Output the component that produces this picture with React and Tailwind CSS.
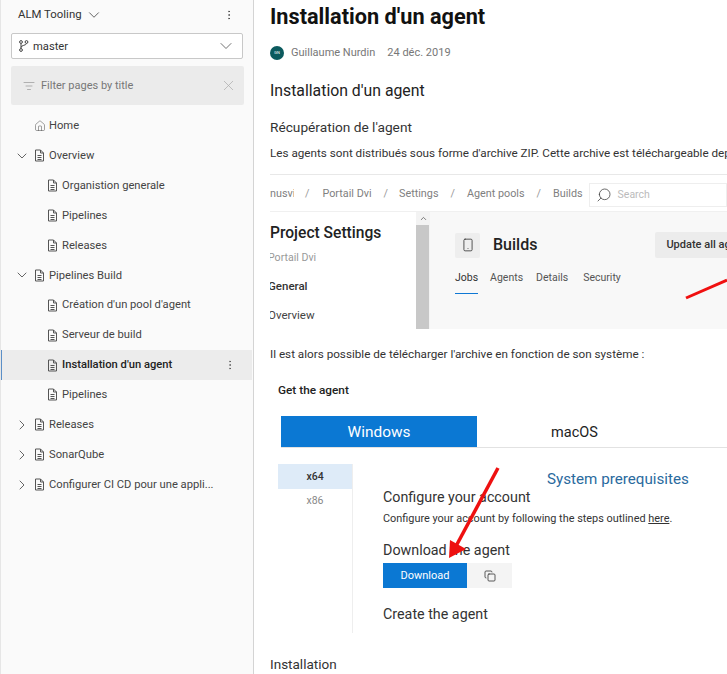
import React from "react";
import { ChevronDown, ChevronRight, EllipsisVertical, Home, ListFilter, X, Search, ChevronUp, Copy, Smartphone } from "lucide-react";

function PageIcon() {
  return (
    <svg width="11" height="13" viewBox="0 0 11 13" fill="none" stroke="#555" strokeWidth="1" className="shrink-0">
      <path d="M1.500 1h5l3 3v8h-8z" />
      <path d="M3.500 6.500h4M3.500 8.500h4M3.500 10.500h4M6.500 1v3h3" />
    </svg>
  );
}

function BranchIcon() {
  return (
    <svg width="10" height="12" viewBox="0 0 10 12" fill="none" stroke="#444" strokeWidth="1" className="shrink-0">
      <circle cx="2" cy="2" r="1.400" />
      <circle cx="7.500" cy="2" r="1.400" />
      <circle cx="2" cy="10" r="1.400" />
      <path d="M2 3.500v5M7.500 3.500c0 2-5.500 1.500-5.500 4" />
    </svg>
  );
}

function Row({ level, label, open, active }) {
  return (
    <div className={`h-[29.9px] flex items-center relative ${active ? "bg-[#ececec] mr-[1px]" : ""}`}>
      {active && <div className="absolute left-0 top-0 bottom-0 w-[1px] bg-[#5b8fc7]" />}
      {level === 0 && (
        <div className="w-[33px] pl-[13px] shrink-0 text-[#666]">
          {open === true && <ChevronDown size={16} strokeWidth={1.5} />}
          {open === false && <ChevronRight size={16} strokeWidth={1.5} />}
        </div>
      )}
      {level === 1 && <div className="w-[46px] shrink-0" />}
      <PageIcon />
      <span className={`ml-[4px] pt-[1px] text-[11.2px] whitespace-nowrap ${active ? "font-medium text-[#222]" : "text-[#444]"}`}>{label}</span>
      {active && <EllipsisVertical size={12} strokeWidth={1.5} className="absolute left-[223px] text-[#555]" />}
    </div>
  );
}

function Sidebar() {
  return (
    <aside className="w-[254px] shrink-0 h-[674px] bg-[#fafafa] border-r border-r-[#d4d4d4] border-l border-l-[#e6e6e6] overflow-hidden">
      <div className="h-[27px] mt-[1px] flex items-center pl-[17px] pr-[17px] text-[#333]">
        <span className="text-[11.4px]">ALM Tooling</span>
        <ChevronDown size={18} strokeWidth={1.2} className="ml-[3px] text-[#555]" />
        <EllipsisVertical size={12} strokeWidth={1.5} className="ml-auto mr-[1px] text-[#444]" />
      </div>
      <div className="mt-[5px] mx-[10px] h-[26px] bg-white border border-[#c8c8c8] rounded-[2px] flex items-center pl-[7px] pr-[6px]">
        <BranchIcon />
        <span className="ml-[4px] text-[11.2px] pt-[2px] text-[#333]">master</span>
        <ChevronDown size={20} strokeWidth={1} className="ml-auto text-[#555]" />
      </div>
      <div className="mt-[7px] ml-[10px] mr-[9px] h-[39px] bg-[#ebebeb] rounded-[2px] flex items-center pl-[12px] pr-[7px]">
        <ListFilter size={12} strokeWidth={1.2} className="text-[#888]" />
        <span className="ml-[6px] pt-[2px] text-[11px] text-[#777]">Filter pages by title</span>
        <X size={17} strokeWidth={1} className="ml-auto text-[#aaa]" />
      </div>
      <div className="mt-[6px]">
        <div className="h-[29.9px] flex items-center pl-[33px]">
          <Home size={12} strokeWidth={1} className="text-[#444]" />
          <span className="ml-[3px] pt-[1px] text-[11.2px] text-[#444]">Home</span>
        </div>
        <Row level={0} open={true} label="Overview" />
        <Row level={1} label="Organistion generale" />
        <Row level={1} label="Pipelines" />
        <Row level={1} label="Releases" />
        <Row level={0} open={true} label="Pipelines Build" />
        <Row level={1} label="Création d'un pool d'agent" />
        <Row level={1} label="Serveur de build" />
        <Row level={1} active label="Installation d'un agent" />
        <Row level={1} label="Pipelines" />
        <Row level={0} open={false} label="Releases" />
        <Row level={0} open={false} label="SonarQube" />
        <Row level={0} open={false} label="Configurer CI CD pour une appli..." />
      </div>
    </aside>
  );
}

function Shot1() {
  return (
    <div className="relative mt-[13px] h-[155px] w-[457px] overflow-hidden border-t border-[#e8e8e8]">
      <div className="h-[37px] flex items-center pt-[3px] border-b border-[#f0f0f0] text-[10.8px] text-[#808080]">
        <span className="w-[24px] overflow-hidden whitespace-nowrap">nusvi</span>
        <span className="ml-[11px] mr-[13px] text-[#999]">/</span>
        <span>Portail Dvi</span>
        <span className="ml-[12px] mr-[11px] text-[#999]">/</span>
        <span>Settings</span>
        <span className="mx-[12px] text-[#999]">/</span>
        <span>Agent pools</span>
        <span className="mx-[12px] text-[#999]">/</span>
        <span>Builds</span>
        <div className="ml-[6px] h-[24px] flex-1 border border-[#eee] flex items-center pl-[6px] text-[#bbb]">
          <Search size={16} strokeWidth={1.2} className="text-[#444] -scale-x-100" />
          <span className="ml-[6px] text-[10.5px]">Search</span>
        </div>
      </div>
      <div className="flex h-[117px]">
        <div className="w-[146px] shrink-0 pt-[10px]">
          <div className="text-[15.6px] font-medium text-[#222] leading-[22px] whitespace-nowrap">Project Settings</div>
          <div className="mt-[6px] text-[10.6px] text-[#999] leading-[16px] -ml-[2px] overflow-hidden">Portail Dvi</div>
          <div className="mt-[12px] text-[11.5px] font-medium text-[#333] leading-[16px] -ml-[2px]">General</div>
          <div className="mt-[13px] text-[11.5px] text-[#444] leading-[16px] -ml-[2px]">Overview</div>
        </div>
        <div className="w-[14px] shrink-0 bg-[#f3f3f3] flex flex-col">
          <div className="h-[13px] flex justify-center items-center"><ChevronUp size={9} strokeWidth={2} className="text-[#555]" /></div>
          <div className="flex-1 bg-[#c8c8c8] mr-[1px]" />
        </div>
        <div className="flex-1 bg-[#f8f8f8] pl-[25px] pt-[20px] relative">
          <div className="flex items-center h-[26px]">
            <div className="w-[25px] h-[25px] bg-[#eeeeee] rounded-[2px] flex items-center justify-center">
              <Smartphone size={14} strokeWidth={1.4} className="text-[#333]" />
            </div>
            <span className="ml-[13px] text-[16px] font-medium text-[#222]">Builds</span>
            <div className="ml-[118px] h-[26px] w-[100px] bg-[#ececec] rounded-[2px] pl-[11px] flex items-center text-[11px] font-medium text-[#333] whitespace-nowrap">Update all agents</div>
          </div>
          <div className="mt-[8px] flex text-[10.5px] text-[#555] h-[30px] leading-[24px]">
            <span className="border-b border-[#0f78d4] h-[24px] text-[#333] box-content pb-[3px]">Jobs</span>
            <span className="ml-[12px]">Agents</span>
            <span className="ml-[13px]">Details</span>
            <span className="ml-[15px]">Security</span>
          </div>
        </div>
      </div>
    </div>
  );
}

function Shot2() {
  return (
    <div className="relative mt-[20px] h-[267px] w-[457px]">
      <div className="pl-[8px] text-[11.8px] font-medium text-[#222] leading-[16px]">Get the agent</div>
      <div className="mt-[18px] ml-[11px] h-[32px] flex border-b border-[#e2e2e2]">
        <div className="w-[196px] h-[31px] bg-[#0b78d3] text-white text-[15.4px] pt-[3px] flex items-center justify-center">Windows</div>
        <div className="w-[195px] h-[31px] text-[#222] text-[14.5px] pt-[3px] flex items-center justify-center">macOS</div>
      </div>
      <div className="flex mt-[16px] ml-[8px]">
        <div className="w-[75px] h-[169px] border-r border-[#eee] shrink-0">
          <div className="h-[25px] bg-[#deebf8] text-[10.5px] font-medium text-[#333] flex items-center justify-center">x64</div>
          <div className="h-[24px] text-[10.5px] text-[#888] flex items-center justify-center">x86</div>
        </div>
        <div className="pl-[30px] flex-1 min-w-0">
          <div className="h-[14px] text-[15.2px] text-[#2a6a9e] pl-[164px] leading-[30px] whitespace-nowrap">System prerequisites</div>
          <div className="mt-[9px] text-[14.3px] text-[#333] leading-[20px]">Configure your account</div>
          <div className="mt-[4px] text-[10.9px] text-[#333] leading-[16px] whitespace-nowrap">Configure your account by following the steps outlined <span className="underline">here</span>.</div>
          <div className="mt-[13px] text-[14.3px] text-[#333] leading-[20px]">Download the agent</div>
          <div className="flex mt-[3px] h-[25px]">
            <div className="w-[84px] bg-[#0b78d3] text-white text-[11px] pt-[2px] flex items-center justify-center">Download</div>
            <div className="w-[45px] bg-[#f4f4f4] flex items-center justify-center"><Copy size={12} strokeWidth={1.6} className="text-[#333]" /></div>
          </div>
          <div className="mt-[16px] text-[14.3px] text-[#333] leading-[20px]">Create the agent</div>
        </div>
      </div>
    </div>
  );
}

export default function App() {
  return (
    <div className="w-[727px] h-[674px] flex bg-white overflow-hidden relative" style={{ fontFamily: 'Roboto,"Open Sans",sans-serif' }}>
      <Sidebar />
      <main className="flex-1 min-w-0 pl-[16px] overflow-hidden">
        <h1 className="text-[21.7px] font-bold text-[#111] leading-[30px] mt-[2px]">Installation d'un agent</h1>
        <div className="mt-[13px] flex items-center h-[16px]">
          <div className="w-[14px] h-[14px] rounded-full bg-[#0b5a5e] text-white text-[4px] flex items-center justify-center">GN</div>
          <span className="ml-[7px] text-[11px] text-[#777]">Guillaume Nurdin</span>
          <span className="ml-[12px] text-[11px] text-[#777]">24 déc. 2019</span>
        </div>
        <h2 className="mt-[20px] text-[15.8px] font-normal text-[#222] leading-[20px]">Installation d'un agent</h2>
        <h3 className="mt-[17px] text-[13.7px] font-normal text-[#333] leading-[18px]">Récupération de l'agent</h3>
        <p className="mt-[9px] text-[11.7px] text-[#333] leading-[16px] whitespace-nowrap">Les agents sont distribués sous forme d'archive ZIP. Cette archive est téléchargeable depuis</p>
        <Shot1 />
        <p className="mt-[17px] text-[11.7px] text-[#333] leading-[16px] whitespace-nowrap">Il est alors possible de télécharger l'archive en fonction de son système :</p>
        <Shot2 />
        <h3 className="mt-[6px] text-[13.5px] font-normal text-[#333] leading-[18px]">Installation</h3>
      </main>
      <svg className="absolute left-0 top-0 pointer-events-none" width="727" height="674" fill="none">
        <path d="M686 298L727 280" stroke="#f01010" strokeWidth="3" />
        <path d="M498 468L455 548" stroke="#ee1010" strokeWidth="3.500" />
        <path d="M449 558L450 540L466 549Z" fill="#ee1010" />
      </svg>
    </div>
  );
}
